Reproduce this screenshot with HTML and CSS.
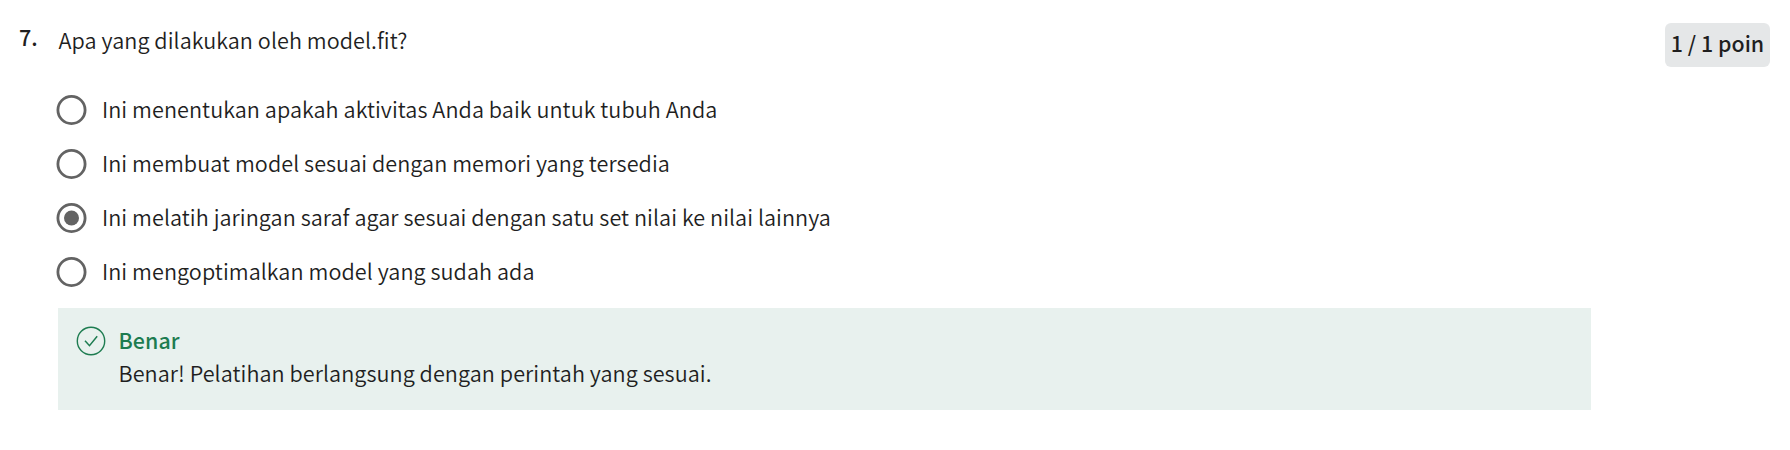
FILE: index.html
```html
<!DOCTYPE html>
<html lang="id">
<head>
<meta charset="utf-8">
<title>Kuis</title>
<link rel="stylesheet" href="styles.css">
</head>
<body>
<main class="question">
  <div class="number">7.</div>
  <section class="content">
    <div class="prompt">Apa yang dilakukan oleh model.fit?</div>
    <div class="options">
      <div class="option">
        <svg class="radio" viewBox="0 0 31 30"><circle class="ring" cx="15.5" cy="15" r="13.6"/></svg>
        <span class="label">Ini menentukan apakah aktivitas Anda baik untuk tubuh Anda</span>
      </div>
      <div class="option">
        <svg class="radio" viewBox="0 0 31 30"><circle class="ring" cx="15.5" cy="15" r="13.6"/></svg>
        <span class="label">Ini membuat model sesuai dengan memori yang tersedia</span>
      </div>
      <div class="option">
        <svg class="radio" viewBox="0 0 31 30"><circle class="ring" cx="15.5" cy="15" r="13.6"/><circle class="dot" cx="15.5" cy="15" r="7.5"/></svg>
        <span class="label">Ini melatih jaringan saraf agar sesuai dengan satu set nilai ke nilai lainnya</span>
      </div>
      <div class="option">
        <svg class="radio" viewBox="0 0 31 30"><circle class="ring" cx="15.5" cy="15" r="13.6"/></svg>
        <span class="label">Ini mengoptimalkan model yang sudah ada</span>
      </div>
    </div>
    <div class="feedback">
      <svg class="check" width="30" height="30" viewBox="0 0 30 30" fill="none" stroke="#1d7c50">
        <circle cx="15" cy="15" r="13.7" stroke-width="1.4"/>
        <path d="M9 14.7l4.5 5L21.2 10.3" stroke-width="1.5"/>
      </svg>
      <div class="message">
        <div class="verdict">Benar</div>
        <div class="detail">Benar! Pelatihan berlangsung dengan perintah yang sesuai.</div>
      </div>
    </div>
  </section>
  <div class="points">1 / 1 poin</div>
</main>
</body>
</html>
```
FILE: styles.css
```css
body {
  margin: 0;
  background: #fff;
  color: #1f1f1f;
  font: 350 21.6px/33px "Noto Sans CJK JP", "Open Sans", sans-serif;
  letter-spacing: 0.055px;
}
.question {
  display: flex;
  align-items: flex-start;
  box-sizing: border-box;
  height: 450px;
  padding: 23px 20px 0 19px;
}
.number {
  width: 39px;
  margin-top: -3px;
  font-weight: 500;
}
.content { width: 1533px; }
.prompt {
  height: 60px;
  padding-left: 0.5px;
}
.option {
  display: flex;
  align-items: center;
  height: 54px;
  margin-left: -2px;
}
.radio {
  width: 31px;
  height: 30px;
  margin-right: 15px;
}
.ring {
  fill: none;
  stroke: #636363;
  stroke-width: 2.8;
}
.dot { fill: #636363; }
.label { padding-bottom: 4px; }
.feedback {
  display: flex;
  box-sizing: border-box;
  height: 102px;
  margin-top: 9px;
  padding: 18px 18px 0;
  background: #e8f1ee;
}
.message { margin: -3px 0 0 12.5px; }
.verdict {
  color: #1d7c50;
  font-weight: 500;
  font-size: 21.4px;
}
.points {
  box-sizing: border-box;
  width: 105px;
  height: 44px;
  margin-left: auto;
  padding-top: 3px;
  border-radius: 6px;
  background: #e5e7e8;
  font-size: 21.4px;
  font-weight: 500;
  letter-spacing: 0;
  text-align: center;
  white-space: nowrap;
}
```
